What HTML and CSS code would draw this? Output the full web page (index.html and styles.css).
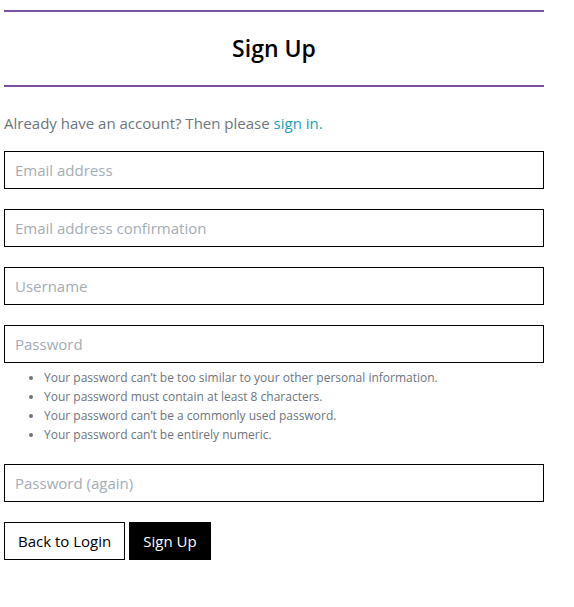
FILE: index.html
```html
<!DOCTYPE html>
<html>
<head>
<meta charset="utf-8">
<link rel="stylesheet" href="styles.css">
</head>
<body>
<div class="page">
  <div class="title-bar"><h1>Sign Up</h1></div>
  <p class="lead">Already have an account? Then please <a href="#">sign in.</a></p>
  <form class="form">
    <input class="field" type="email" placeholder="Email address">
    <input class="field" type="email" placeholder="Email address confirmation">
    <input class="field" type="text" placeholder="Username">
    <div class="pw-group">
      <input class="field" type="password" placeholder="Password">
      <ul class="help">
        <li>Your password can’t be too similar to your other personal information.</li>
        <li>Your password must contain at least 8 characters.</li>
        <li>Your password can’t be a commonly used password.</li>
        <li>Your password can’t be entirely numeric.</li>
      </ul>
    </div>
    <input class="field" type="password" placeholder="Password (again)">
    <div class="actions">
      <button type="button" class="btn btn-outline">Back to Login</button>
      <button type="submit" class="btn btn-dark">Sign Up</button>
    </div>
  </form>
</div>
</body>
</html>
```
FILE: styles.css
```css
* { box-sizing: border-box; }
body {
  margin: 0;
  font-family: "Open Sans", "Noto Sans", sans-serif;
  color: #212529;
  background: #fff;
}
.page {
  width: 540px;
  margin-left: 4px;
  padding-top: 10px;
}
.title-bar {
  border-top: 2px solid #7a52a0;
  border-bottom: 2px solid #7a52a0;
  height: 77px;
  display: flex;
  align-items: center;
  justify-content: center;
  padding-bottom: 2px;
}
.title-bar h1 {
  margin: 0;
  font-size: 23px;
  font-weight: 600;
  color: #000;
}
.lead {
  margin: 25px 0 17px;
  font-size: 15px;
  line-height: 22px;
  color: #6c757d;
}
.lead a {
  color: #17a2b8;
  text-decoration: none;
}
.form {
  display: flex;
  flex-direction: column;
  gap: 20px;
}
.field {
  display: block;
  width: 100%;
  height: 38px;
  border: 1px solid #000;
  padding: 0 10px;
  font-family: inherit;
  font-size: 15px;
  color: #495057;
  background: #fff;
  outline: none;
}
.field::placeholder {
  color: #a3acb5;
}
.help {
  margin: 5px 0 0;
  padding-left: 40px;
  font-size: 12px;
  line-height: 19px;
  color: #6c757d;
}
.actions {
  display: flex;
  gap: 4px;
}
.btn {
  height: 38px;
  padding: 0 13px;
  font-family: inherit;
  font-size: 15px;
  border: 1px solid #000;
  cursor: pointer;
}
.btn-outline {
  background: #fff;
  color: #000;
}
.btn-dark {
  background: #000;
  color: #fff;
}
```
